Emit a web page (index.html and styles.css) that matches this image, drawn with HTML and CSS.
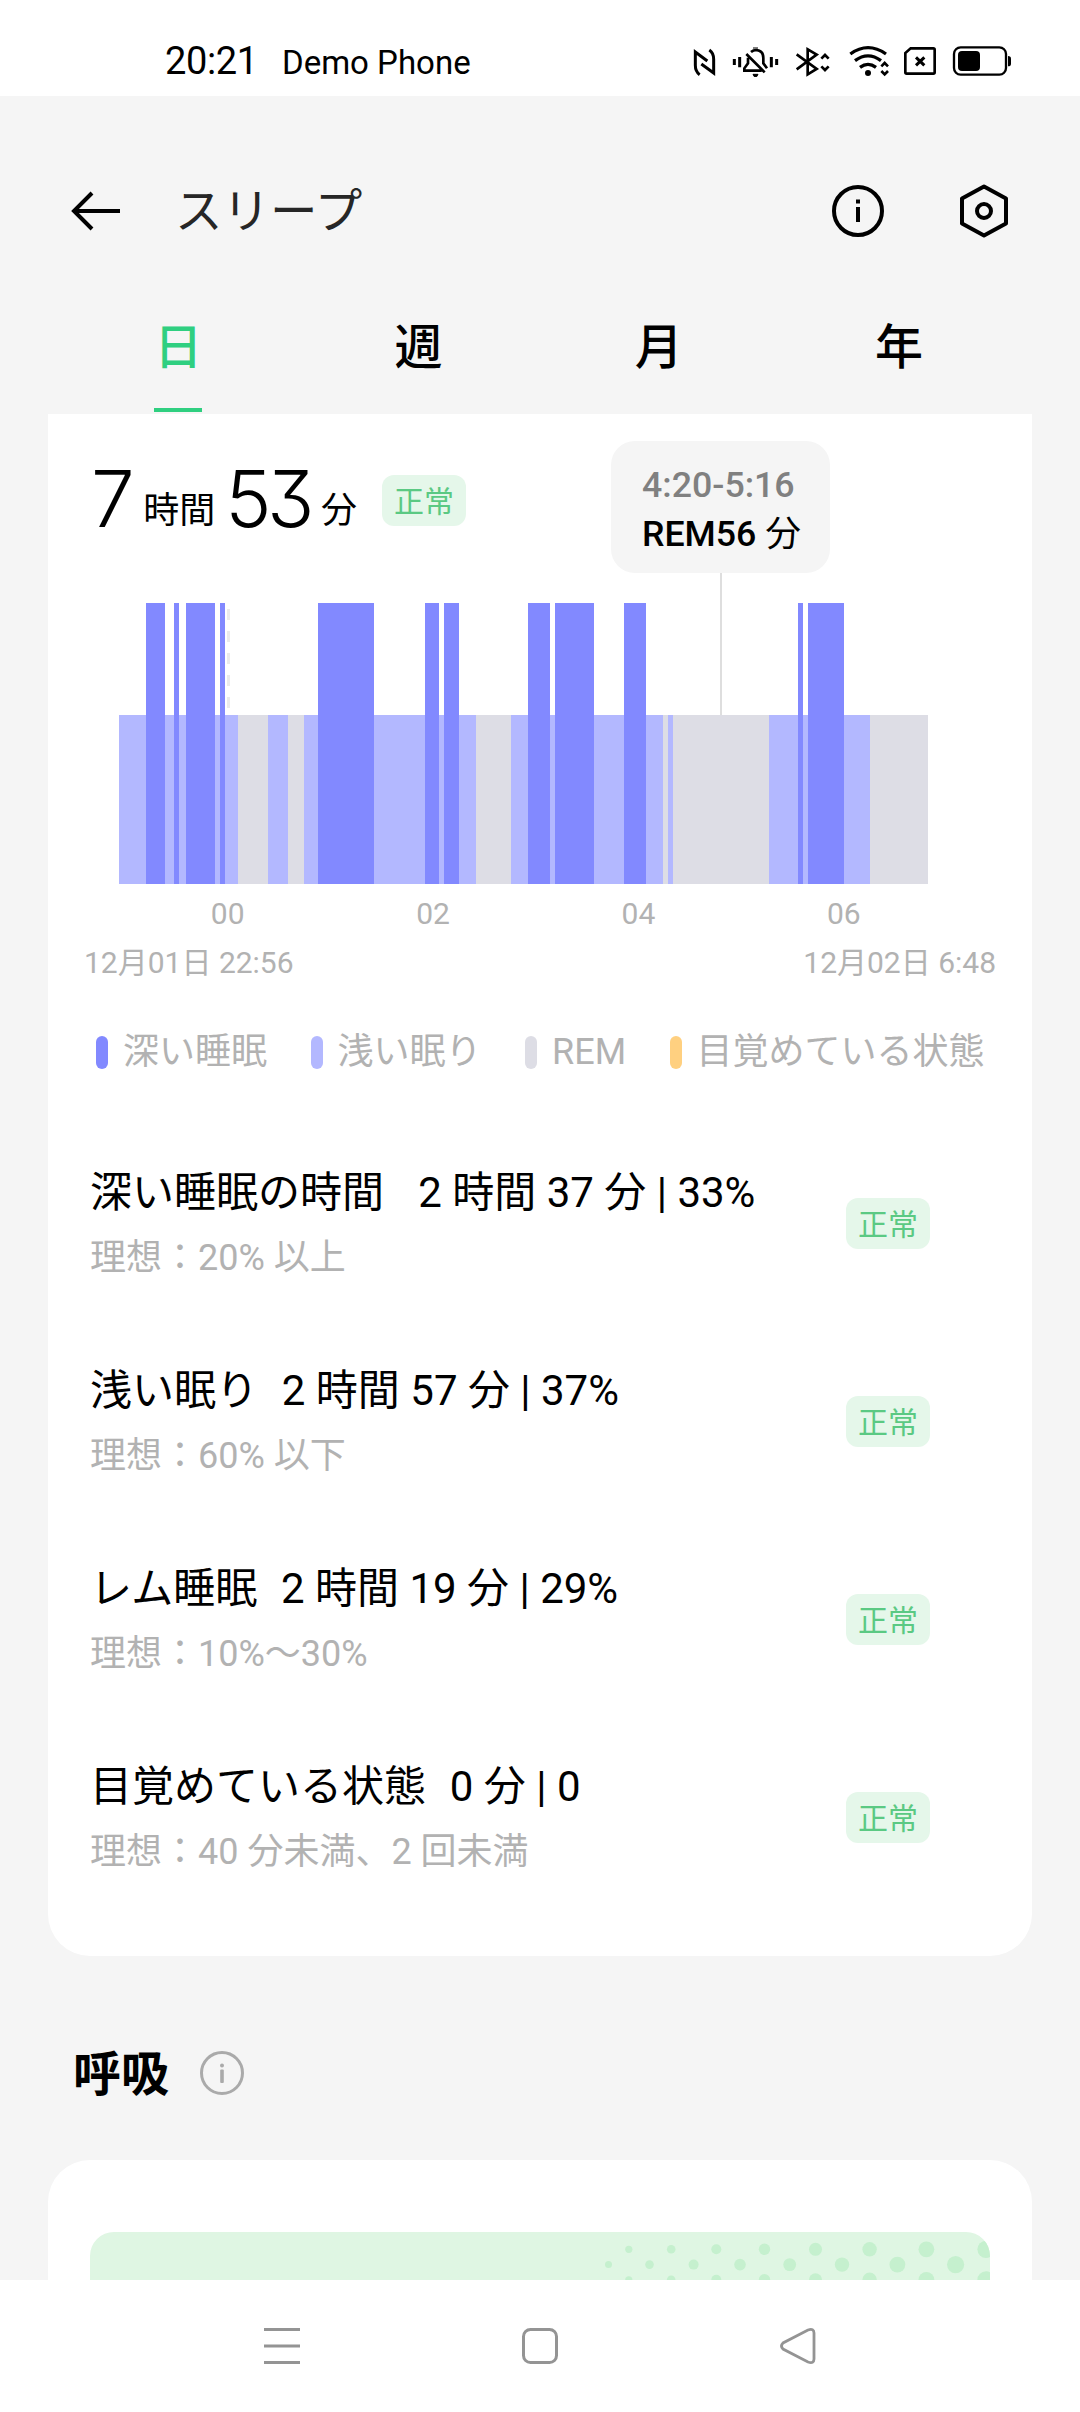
FILE: index.html
```
<!DOCTYPE html>
<html lang="ja">
<head>
    <meta charset="UTF-8">
    <meta name="viewport" content="width=device-width, initial-scale=1.0">
    <title>スリープ</title>
    <link rel="stylesheet" href="styles.css">
</head>
<body>
    <div class="status-bar">
        <span class="time">20:21</span>
        <span class="carrier">Demo Phone</span>
        <div class="status-icons">
            <svg width="25" height="32" viewBox="99 135 75 96" fill="none" stroke="#000" stroke-width="9">
                <path d="M119 224C109 217 106 210 106 196V156L142 183M148 150C157 156 161 164 161 178V219L124 192"/>
            </svg>
            <svg width="49" height="32" viewBox="213 135 147 96" fill="none" stroke="#000" stroke-width="8">
                <path d="M223 177V195M239 171V202M334 171V202M350 177V195" stroke-width="9"/>
                <path d="M273 156Q280 150 289 150Q310 152 310 174V190L321 205M264 173V190L253 205V212H305M259 162L314 217"/>
                <path d="M279 144H294M279 223H294L290 230H283Z" stroke-width="3" fill="#000"/>
            </svg>
            <svg width="41" height="32" viewBox="399 135 123 96" fill="none" stroke="#000" stroke-width="8">
                <path d="M410 163L470 207L443 223V148L470 164L410 208M484 176L495 165L506 176M484 199L495 210L506 199"/>
            </svg>
            <svg width="43" height="32" viewBox="561 135 129 96" fill="none" stroke="#000" stroke-width="10">
                <path d="M571 162Q624 124 678 162M585 182Q624 153 663 182M600 202Q624 184 648 202"/>
                <path d="M664 199L674 189L684 199M664 213L674 223L684 213" stroke-width="8"/>
                <circle cx="624" cy="219" r="9" fill="#000" stroke="none"/>
            </svg>
            <svg width="34" height="32" viewBox="729 135 102 96" fill="none" stroke="#000" stroke-width="8">
                <path d="M752 145H820Q824 145 824 149V217Q824 221 820 221H740Q736 221 736 217V159Z"/>
                <path d="M768 172L793 196M793 172L768 196" stroke-width="9"/>
            </svg>
            <svg width="62" height="32" viewBox="870 135 186 96">
                <rect x="882" y="142" width="156" height="82" rx="20" fill="none" stroke="#000" stroke-width="7"/>
                <rect x="894" y="153" width="66" height="60" rx="12"/>
                <path d="M1044 168Q1053 168 1053 176V191Q1053 199 1044 199Z"/>
            </svg>
        </div>
    </div>

    <header class="header">
        <svg class="back" width="50" height="42" viewBox="0 0 50 42" fill="none" stroke="#000" stroke-width="4">
            <path d="M49 21H3M21 3L3 21L21 39"/>
        </svg>
        <h1>スリープ</h1>
        <svg class="info" width="52" height="52" viewBox="0 0 52 52">
            <circle cx="26" cy="26" r="24" fill="none" stroke="#000" stroke-width="4"/>
            <path d="M24 14.5h4v4h-4zM24 22h4v15h-4z"/>
        </svg>
        <svg class="settings" width="52" height="56" viewBox="0 0 52 56" fill="none" stroke="#000" stroke-width="4" stroke-linejoin="round">
            <path d="M26 3.500L48 15.500V40.500L26 52.500L4 40.500V15.500Z"/>
            <circle cx="26" cy="28" r="7"/>
        </svg>
    </header>

    <nav class="tabs">
        <div class="tab active">日</div>
        <div class="tab">週</div>
        <div class="tab">月</div>
        <div class="tab">年</div>
    </nav>

    <main>
        <section class="card sleep">
            <div class="summary">
                <span class="num">7</span>
                <span class="unit hours">時間</span>
                <span class="num">53</span>
                <span class="unit minutes">分</span>
                <span class="badge">正常</span>
            </div>
            <div class="tooltip">
                <div class="range">4:20-5:16</div>
                <div>REM56 <span>分</span></div>
            </div>

            <div class="chart">
                <i class="midnight"></i>
                <i class="light" style="width: 27px"></i>
                <i class="deep" style="width: 19px"></i>
                <i class="light" style="width: 9px"></i>
                <i class="deep" style="width: 5px"></i>
                <i class="light" style="width: 7px"></i>
                <i class="deep" style="width: 29px"></i>
                <i class="light" style="width: 5px"></i>
                <i class="deep" style="width: 5px"></i>
                <i class="light" style="width: 13px"></i>
                <i class="rem" style="width: 30px"></i>
                <i class="light" style="width: 20px"></i>
                <i class="rem" style="width: 16px"></i>
                <i class="light" style="width: 13.500px"></i>
                <i class="deep" style="width: 56.500px"></i>
                <i class="light" style="width: 51px"></i>
                <i class="deep" style="width: 14px"></i>
                <i class="light" style="width: 5px"></i>
                <i class="deep" style="width: 15px"></i>
                <i class="light" style="width: 17px"></i>
                <i class="rem" style="width: 35px"></i>
                <i class="light" style="width: 17px"></i>
                <i class="deep" style="width: 22px"></i>
                <i class="light" style="width: 5px"></i>
                <i class="deep" style="width: 39px"></i>
                <i class="light" style="width: 30px"></i>
                <i class="deep" style="width: 22px"></i>
                <i class="light" style="width: 17px"></i>
                <i class="rem" style="width: 5px"></i>
                <i class="light" style="width: 5px"></i>
                <i class="rem" style="width: 96px"></i>
                <i class="light" style="width: 29px"></i>
                <i class="deep" style="width: 5px"></i>
                <i class="light" style="width: 5px"></i>
                <i class="deep" style="width: 36px"></i>
                <i class="light" style="width: 26px"></i>
                <i class="rem" style="width: 58px"></i>
            </div>
            <div class="hours-axis">
                <span>00</span>
                <span>02</span>
                <span>04</span>
                <span>06</span>
            </div>
            <div class="dates">
                <span>12月01日 22:56</span>
                <span>12月02日 6:48</span>
            </div>

            <div class="legend">
                <span><i class="deep"></i>深い睡眠</span>
                <span><i class="light"></i>浅い眠り</span>
                <span><i class="rem"></i>REM</span>
                <span><i class="awake"></i>目覚めている状態</span>
            </div>

            <div class="row">
                <div class="detail">
                    <div class="name">深い睡眠の時間 <span>  2 時間 37 分 | 33%</span></div>
                    <div class="ideal">理想：20% 以上</div>
                </div>
                <span class="badge">正常</span>
            </div>
            <div class="row">
                <div class="detail">
                    <div class="name">浅い眠り<span>  2 時間 57 分 | 37%</span></div>
                    <div class="ideal">理想：60% 以下</div>
                </div>
                <span class="badge">正常</span>
            </div>
            <div class="row">
                <div class="detail">
                    <div class="name">レム睡眠<span>  2 時間 19 分 | 29%</span></div>
                    <div class="ideal">理想：10%～30%</div>
                </div>
                <span class="badge">正常</span>
            </div>
            <div class="row">
                <div class="detail">
                    <div class="name">目覚めている状態<span>  0 分 | 0</span></div>
                    <div class="ideal">理想：40 分未満、2 回未満</div>
                </div>
                <span class="badge">正常</span>
            </div>
        </section>

        <div class="section-title">
            <h2>呼吸</h2>
            <svg width="44" height="44" viewBox="0 0 44 44" fill="#aaa">
                <circle cx="22" cy="22" r="20.500" fill="none" stroke="#aaa" stroke-width="3"/>
                <circle cx="22" cy="14.500" r="2"/>
                <rect x="20.200" y="18.500" width="3.600" height="13.500" rx="1"/>
            </svg>
        </div>

        <section class="card breath">
            <div class="banner">
                <svg width="400" height="48" viewBox="0 0 400 48" fill="#c5f0ce">
                    <circle cx="38.800" cy="17.300" r="3.600"/>
                    <circle cx="81.200" cy="17.300" r="4.300"/>
                    <circle cx="126.300" cy="17.300" r="5"/>
                    <circle cx="174.500" cy="17.300" r="5.700"/>
                    <circle cx="225.500" cy="17.300" r="6.500"/>
                    <circle cx="279.600" cy="17.300" r="7.200"/>
                    <circle cx="336.400" cy="17.300" r="7.900"/>
                    <circle cx="396" cy="17.300" r="8.600"/>
                    <circle cx="18.500" cy="32.600" r="3.500"/>
                    <circle cx="59.500" cy="32.600" r="4.300"/>
                    <circle cx="103.600" cy="32.600" r="5"/>
                    <circle cx="150" cy="32.600" r="5.800"/>
                    <circle cx="199.700" cy="32.600" r="6.400"/>
                    <circle cx="252" cy="32.600" r="7.200"/>
                    <circle cx="307.400" cy="32.600" r="7.900"/>
                    <circle cx="365.600" cy="32.600" r="8.600"/>
                    <circle cx="38.800" cy="47.800" r="3.600"/>
                    <circle cx="81.200" cy="47.800" r="4.300"/>
                    <circle cx="126.300" cy="47.800" r="5"/>
                    <circle cx="174.500" cy="47.800" r="5.700"/>
                    <circle cx="225.500" cy="47.800" r="6.500"/>
                    <circle cx="279.600" cy="47.800" r="7.200"/>
                    <circle cx="336.400" cy="47.800" r="7.900"/>
                    <circle cx="396" cy="47.800" r="8.600"/>
                </svg>
            </div>
        </section>
    </main>

    <div class="nav-bar">
        <svg width="36" height="36" viewBox="0 0 36 36" stroke="#949494" stroke-width="3">
            <path d="M0 1.500H36M0 18H36M0 34.500H36"/>
        </svg>
        <svg width="36" height="36" viewBox="0 0 36 36" fill="none" stroke="#949494" stroke-width="3">
            <rect x="1.500" y="1.500" width="33" height="33" rx="7"/>
        </svg>
        <svg width="36" height="36" viewBox="0 0 36 36" fill="none" stroke="#949494" stroke-width="2.800">
            <path d="M28 2Q34 0 34 5V31Q34 36 28 34L3 21Q0 18 3 15Z"/>
        </svg>
    </div>
</body>
</html>
```
FILE: styles.css
```
* {
    box-sizing: border-box;
}

body {
    background: #f5f5f5;
    font-family: Roboto, "Noto Sans CJK JP", sans-serif;
    color: #000;
    margin: 0;
    height: 2412px;
    display: flex;
    flex-direction: column;
    overflow: hidden;
}

svg {
    display: block;
    flex-shrink: 0;
}

h1,
h2 {
    margin: 0;
}

/* status bar */
.status-bar {
    display: flex;
    align-items: baseline;
    height: 96px;
    padding: 39px 68px 0 165px;
    background: #fff;
    line-height: 44px;
}

.time {
    width: 117px;
    font-size: 38px;
    letter-spacing: -0.4px;
}

.carrier {
    font-size: 33px;
}

.status-icons {
    display: flex;
    gap: 13px;
    align-self: flex-start;
    margin-top: 6px;
    margin-left: auto;
}

/* header */
.header {
    display: flex;
    align-items: center;
    height: 186px;
    padding: 44px 70px 0 71px;
}

.header h1 {
    margin-left: 54px;
    padding-top: 2px;
    font-size: 47.5px;
    font-weight: 400;
    line-height: 70px;
    color: #262626;
}

.info {
    margin-left: auto;
    margin-right: 74px;
}

/* tabs */
.tabs {
    display: flex;
    height: 132px;
    padding: 0 58px;
}

.tab {
    width: 240.3px;
    font-size: 48px;
    font-weight: 500;
    line-height: 132px;
    text-align: center;
}

.tab.active {
    color: #2fcf80;
}

.tab.active::after {
    content: "";
    display: block;
    width: 48px;
    height: 4px;
    margin: -6px auto 0;
    background: #2fcf80;
}

main {
    height: 1866px;
    overflow: hidden;
}

.card {
    position: relative;
    margin: 0 48px;
    background: #fff;
}

.sleep {
    height: 1542px;
    border-radius: 0 0 42px 42px;
}

/* total sleep time */
.summary {
    display: flex;
    align-items: baseline;
    height: 189px;
    padding: 35px 0 0 43px;
    line-height: 100px;
}

.num {
    font-family: Inter, Roboto, sans-serif;
    font-size: 78px;
    font-weight: 300;
    letter-spacing: -4.5px;
    font-feature-settings: "cv09";
}

.unit {
    margin-left: 13px;
    font-size: 36px;
    line-height: 92px;
    transform: translateY(-4px);
}

.hours {
    margin-right: 10px;
}

.minutes {
    margin-left: 11px;
}

.badge {
    width: 84px;
    height: 51px;
    border-radius: 12px;
    background: #e5f7ea;
    color: #5bc983;
    font-size: 30px;
    line-height: 53px;
    text-align: center;
}

.summary .badge {
    align-self: flex-start;
    margin-top: 26px;
    margin-left: 25px;
}

.tooltip {
    position: absolute;
    top: 27px;
    left: 563px;
    width: 219px;
    height: 132px;
    padding: 20px 0 0 31px;
    border-radius: 24px;
    background: #f5f5f5;
    font-size: 35.7px;
    font-weight: 500;
    line-height: 49px;
}

.tooltip::after {
    content: "";
    position: absolute;
    top: 132px;
    left: 109px;
    width: 2px;
    height: 142px;
    background: #dedede;
}

.tooltip span {
    font-weight: 400;
}

.range {
    color: #808080;
}

/* sleep stages */
.deep {
    background: #8289ff;
}

.light {
    background: #b3b8ff;
}

.rem {
    background: #dddde5;
}

.awake {
    background: #ffd080;
}

.chart {
    position: relative;
    display: flex;
    align-items: flex-end;
    height: 281px;
    margin-left: 71px;
}

.chart i {
    height: 169px;
}

.chart .deep {
    height: 281px;
}

.chart .midnight {
    position: absolute;
    top: 6px;
    left: 108px;
    width: 3px;
    height: 99px;
    background: repeating-linear-gradient(#ebebeb 0 11px, #fff 11px 22px);
}

.hours-axis,
.dates {
    display: flex;
    color: #b2b2b2;
    font-size: 30px;
    line-height: 36px;
}

.hours-axis {
    padding: 12px 0 0 77px;
}

.hours-axis span {
    width: 205.4px;
    text-align: center;
}

.dates {
    justify-content: space-between;
    padding: 13px 36px 0;
}

.legend {
    display: flex;
    gap: 43.5px;
    height: 60px;
    margin-top: 41px;
    padding-left: 48px;
    color: #b2b2b2;
    font-size: 36px;
    line-height: 62px;
}

.legend span {
    display: flex;
    align-items: center;
}

.legend i {
    width: 12px;
    height: 33px;
    margin-right: 15px;
    border-radius: 6px;
}

/* stage details */
.row {
    display: flex;
    align-items: center;
    justify-content: space-between;
    height: 198px;
    padding: 0 102px 0 42px;
}

.legend + .row {
    margin-top: 42px;
}

.detail {
    padding-top: 3px;
}

.name {
    font-size: 42px;
    line-height: 66px;
    white-space: pre;
}

.name span {
    margin-left: 3px;
}

.ideal {
    color: #b2b2b2;
    font-size: 36px;
    line-height: 64px;
}

.section-title {
    display: flex;
    align-items: center;
    height: 204px;
    padding: 30px 0 0 73px;
}

.section-title h2 {
    margin-right: 31px;
    padding-top: 3px;
    font-size: 48px;
    font-weight: 700;
    line-height: 70px;
}

.breath {
    height: 160px;
    padding: 72px 42px 0;
    border-radius: 42px 42px 0 0;
}

.banner {
    display: flex;
    justify-content: flex-end;
    height: 88px;
    border-radius: 24px 24px 0 0;
    background: #dff6e3;
    overflow: hidden;
}

/* system navigation */
.nav-bar {
    display: flex;
    justify-content: space-between;
    height: 132px;
    padding: 48px 264px 0;
    background: #fff;
}
```
